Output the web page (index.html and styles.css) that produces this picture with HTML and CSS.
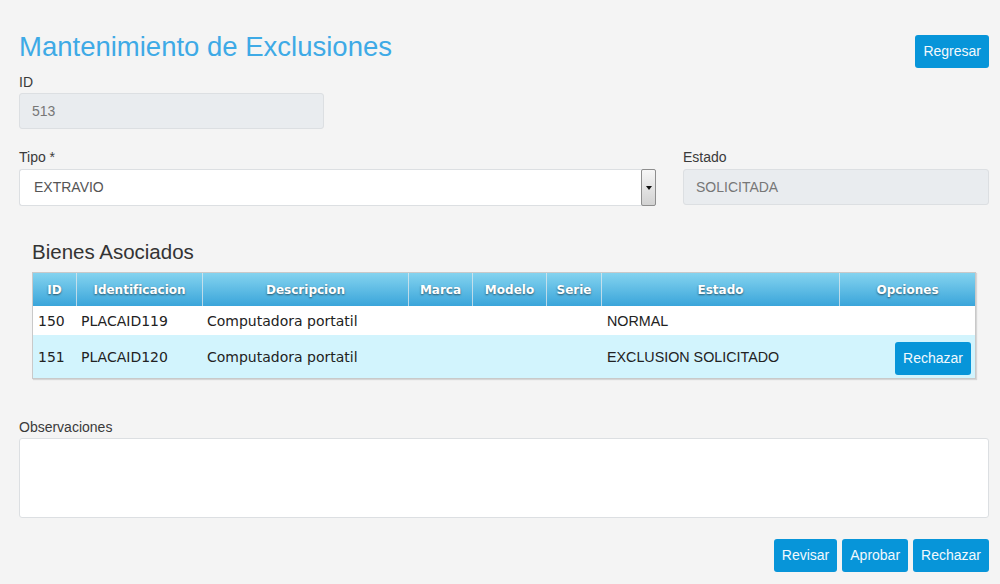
FILE: index.html
```html
<!DOCTYPE html>
<html lang="es">
<head>
<meta charset="utf-8">
<title>Mantenimiento de Exclusiones</title>
<link rel="stylesheet" href="styles.css">
</head>
<body>
<div class="page">
  <header class="top">
    <h1 class="title">Mantenimiento de Exclusiones</h1>
    <button class="btn btn-top">Regresar</button>
  </header>

  <div class="field">
    <label class="lbl lbl-id">ID</label>
    <div class="input disabled id-input">513</div>
  </div>

  <div class="form-row">
    <div class="field">
      <label class="lbl">Tipo *</label>
      <div class="select">
        <span class="select-text">EXTRAVIO</span>
        <span class="select-arrow"><span class="tri"></span></span>
      </div>
    </div>
    <div class="field">
      <label class="lbl">Estado</label>
      <div class="input disabled">SOLICITADA</div>
    </div>
  </div>

  <section class="bienes">
    <h2 class="subtitle">Bienes Asociados</h2>
    <table class="grid">
      <colgroup>
        <col class="c-id"><col class="c-ident"><col class="c-desc"><col class="c-marca"><col class="c-modelo"><col class="c-serie"><col class="c-estado"><col class="c-op">
      </colgroup>
      <thead>
        <tr>
          <th>ID</th><th>Identificacion</th><th>Descripcion</th><th>Marca</th><th>Modelo</th><th>Serie</th><th>Estado</th><th>Opciones</th>
        </tr>
      </thead>
      <tbody>
        <tr class="r1">
          <td>150</td><td>PLACAID119</td><td>Computadora portatil</td><td></td><td></td><td></td><td class="st">NORMAL</td><td class="op"></td>
        </tr>
        <tr class="r2">
          <td>151</td><td>PLACAID120</td><td>Computadora portatil</td><td></td><td></td><td></td><td class="st">EXCLUSION SOLICITADO</td><td class="op"><button class="btn btn-row">Rechazar</button></td>
        </tr>
      </tbody>
    </table>
  </section>

  <div class="field obs">
    <label class="lbl">Observaciones</label>
    <div class="textarea"></div>
  </div>

  <div class="actions">
    <button class="btn">Revisar</button>
    <button class="btn">Aprobar</button>
    <button class="btn">Rechazar</button>
  </div>
</div>
</body>
</html>
```

FILE: styles.css
```css
* { box-sizing: border-box; }
html, body { margin: 0; padding: 0; }
body {
  background: #f4f4f4;
  font-family: "Liberation Sans", Arial, sans-serif;
  color: #333;
  width: 1000px;
  height: 584px;
  overflow: hidden;
}
.page {
  padding: 31px 11px 0 19px;
}
.top {
  display: flex;
  justify-content: space-between;
  align-items: flex-start;
}
.title {
  margin: 0;
  font-size: 27.5px;
  line-height: 32px;
  font-weight: normal;
  color: #3eaae6;
}
.btn {
  font-family: "Liberation Sans", Arial, sans-serif;
  font-size: 14px;
  height: 33px;
  line-height: 33px;
  padding: 0 8px;
  border: 0;
  border-radius: 3px;
  background: #0795d9;
  color: #f2f9fd;
  cursor: pointer;
}
.btn-top { margin-top: 4px; }
.lbl {
  display: block;
  font-size: 14px;
  line-height: 20px;
  color: #3a3a3a;
}
.lbl-id { margin-top: 4px; }
.input {
  margin-top: 1px;
  height: 36px;
  line-height: 34px;
  padding: 0 12px;
  border: 1px solid #dcdfe2;
  border-radius: 3px;
  font-size: 14px;
  background: #fff;
  color: #555;
}
.input.disabled {
  background: #e9ecef;
  color: #777;
}
.id-input { width: 305px; }
.form-row {
  margin-top: 18px;
  display: grid;
  grid-template-columns: 1fr 306px;
  column-gap: 27px;
}
.form-row .input { margin-top: 2px; }
.select {
  margin-top: 2px;
  height: 37px;
  display: flex;
  align-items: stretch;
  border: 1px solid #dcdfe2;
  border-right: 0;
  border-radius: 3px;
  background: #fff;
}
.select-text {
  flex: 1;
  line-height: 35px;
  padding: 0 14px;
  font-size: 14px;
  color: #555;
}
.select-arrow {
  width: 15px;
  margin: -1px 0;
  border: 1px solid #8e8e8e;
  border-radius: 2px;
  background: linear-gradient(#f6f6f6, #d2d2d2);
  display: flex;
  align-items: center;
  justify-content: center;
}
.tri {
  width: 0;
  height: 0;
  border-left: 3px solid transparent;
  border-right: 3px solid transparent;
  border-top: 4px solid #111;
}
.bienes {
  padding: 0 13px;
  margin-top: 34px;
}
.subtitle {
  margin: 0;
  font-size: 20.5px;
  line-height: 24px;
  font-weight: normal;
  color: #333;
}
.grid {
  margin-top: 8px;
  width: 944px;
  table-layout: fixed;
  border-collapse: separate;
  border-spacing: 0;
  border: 1px solid #c9c9c9;
  box-shadow: 1px 1px 1px rgba(0,0,0,0.12);
}
.c-id { width: 43px; }
.c-ident { width: 126px; }
.c-desc { width: 206px; }
.c-marca { width: 64px; }
.c-modelo { width: 74px; }
.c-serie { width: 55px; }
.c-estado { width: 238px; }
.c-op { width: 136px; }
.grid th {
  height: 33px;
  padding: 0;
  background: linear-gradient(#84d3ef, #3aa5da);
  color: #fff;
  font-family: "DejaVu Sans", Verdana, sans-serif;
  font-size: 12px;
  font-weight: bold;
  text-align: center;
  text-shadow: 0 1px 2px rgba(0,0,0,0.55);
  border-left: 1px solid rgba(225,232,236,0.75);
}
.grid th:first-child { border-left: 0; }
.grid td {
  padding: 0 5px;
  font-family: "DejaVu Sans", Verdana, sans-serif;
  font-size: 14px;
  color: #222;
  white-space: nowrap;
  vertical-align: middle;
}
.grid td.st {
  font-family: "Liberation Sans", Arial, sans-serif;
  font-size: 14.3px;
  padding-left: 6px;
}
.grid td.op { text-align: right; padding-right: 4px; }
.r1 td { height: 29px; background: #fff; }
.r2 td { height: 43px; background: #d2f4fd; }
.btn-row {
  margin-top: 4px;
  display: inline-block;
  vertical-align: middle;
  padding: 0 8px;
}
.obs { margin-top: 38px; }
.textarea {
  margin-top: 1px;
  height: 80px;
  background: #fff;
  border: 1px solid #dcdfe2;
  border-radius: 3px;
}
.actions {
  margin-top: 21px;
  display: flex;
  justify-content: flex-end;
  gap: 5px;
}
```
